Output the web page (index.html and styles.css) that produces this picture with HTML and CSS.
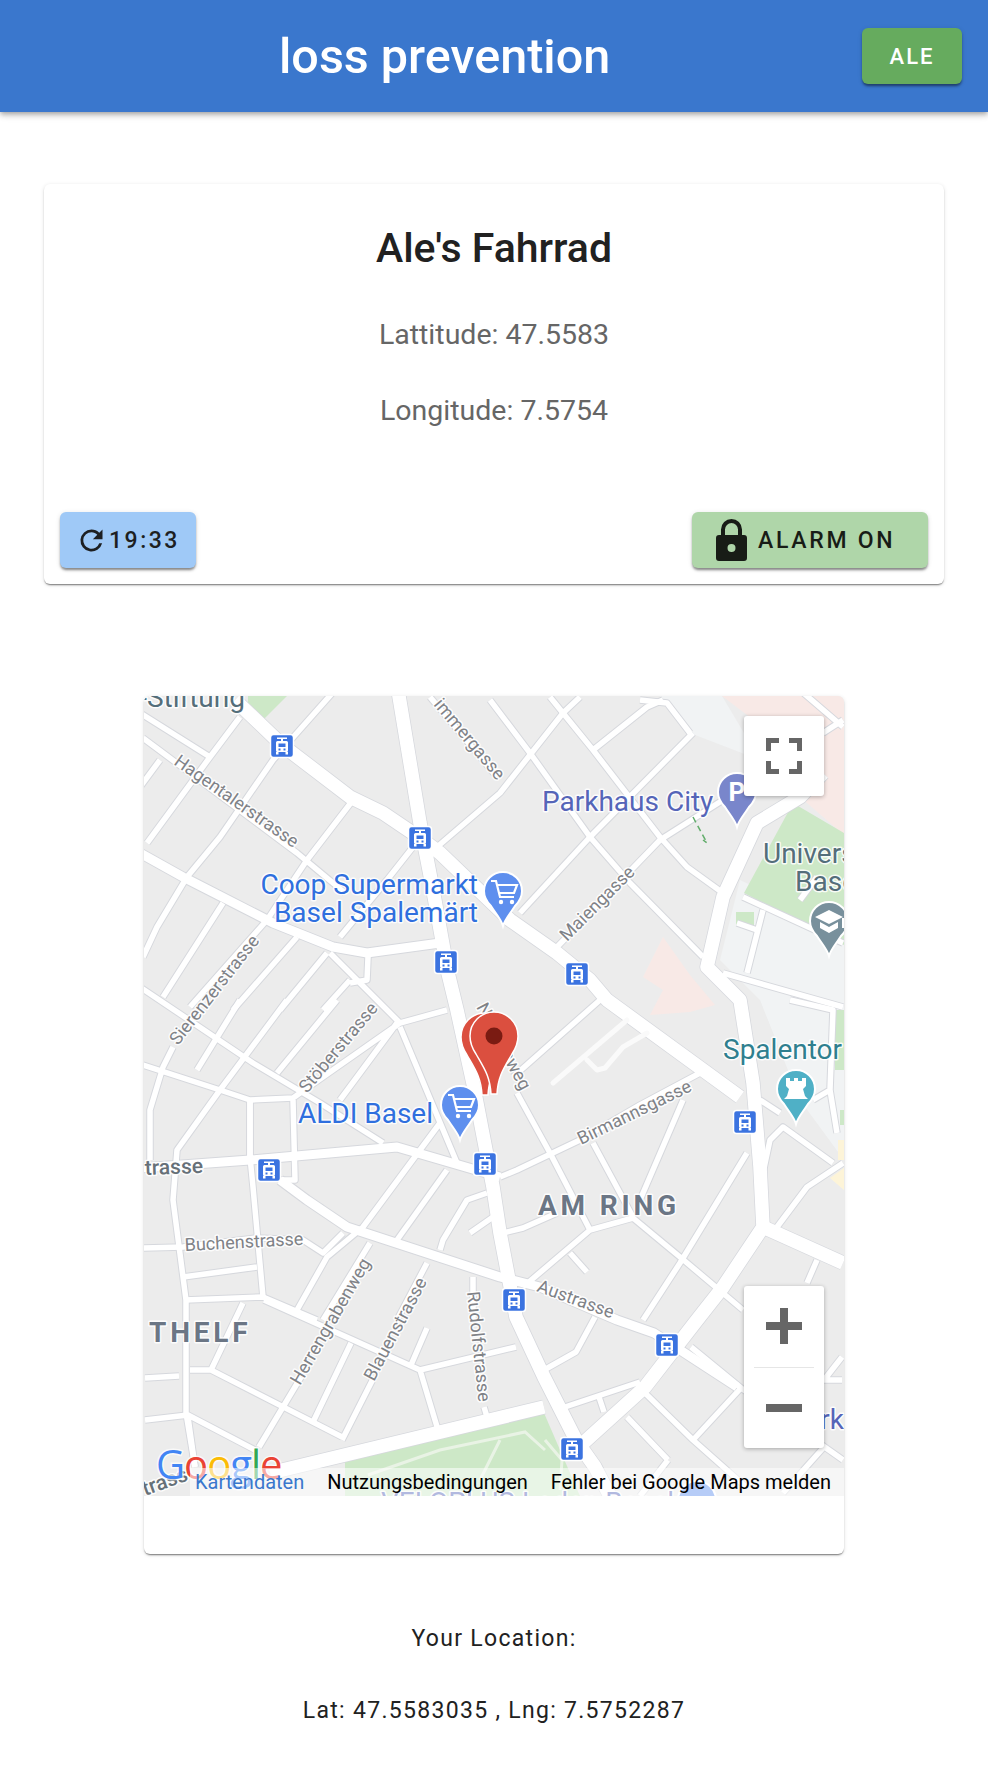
FILE: index.html
```html
<!DOCTYPE html>
<html lang="de">
<head>
    <meta charset="UTF-8">
    <title>loss prevention</title>
    <link rel="stylesheet" href="styles.css">
</head>
<body>

<header class="topbar">
    <h1 class="brand">loss prevention</h1>
    <button class="btn btn-user">ALE</button>
</header>

<main class="page">
    <section class="card bike-card">
        <h2 class="bike-name">Ale's Fahrrad</h2>
        <p class="coord">Lattitude: 47.5583</p>
        <p class="coord">Longitude: 7.5754</p>
        <div class="bike-actions">
            <button class="btn btn-refresh">
                <svg class="icon-refresh" viewBox="0 0 24 24"><path d="M17.65 6.35A7.96 7.96 0 0 0 12 4a8 8 0 1 0 7.73 10h-2.08A6 6 0 1 1 12 6c1.66 0 3.14.69 4.22 1.78L13 11h7V4l-2.35 2.35z"/></svg>
                19:33
            </button>
            <button class="btn btn-alarm">
                <svg class="icon-lock" viewBox="0 0 31 42"><path fill-rule="evenodd" d="M3 16h2V10.500a10.500 10.500 0 0 1 21 0V16h2a3 3 0 0 1 3 3v20a3 3 0 0 1-3 3H3a3 3 0 0 1-3-3V19a3 3 0 0 1 3-3zM9 16h13V10.500a6.500 6.500 0 0 0-13 0V16zM15.500 25a4 4 0 1 0 0 8 4 4 0 0 0 0-8z"/></svg>
                ALARM ON
            </button>
        </div>
    </section>

    <section class="card map-card">
        <div class="map">
            <svg class="map-canvas" viewBox="144 696 700 800">
                <defs>
                    <g id="thinRoads">
                        <path d="M140 713L210 757M143 738L297 853L345 893M335 690L273 760L220 837L187 877L157 927L143 957M240 717L210 757L147 843M160 760L140 787"/>
                        <path d="M353 800L307 860L267 920L190 1007M223 903L163 997M297 937L233 1010M327 953L280 1010M350 980L323 1010"/>
                        <path d="M330 953L400 1023M368 957L367 980L350 983M140 987L253 1063L320 1103L383 1143M413 847L387 880L340 937"/>
                        <path d="M437 847L500 793L563 713L580 697M430 697L497 777M490 700L530 753L590 837L630 883L703 957"/>
                        <path d="M550 697L593 750L660 837L687 867L723 893M593 750L647 707L663 700M520 913L590 837L693 733M557 947L660 840L723 800L760 775"/>
                        <path d="M690 733L667 703L640 700M743 897L843 943M737 923L757 930M763 910L747 973M723 973L843 1007M800 690L843 727M800 900L817 877M823 733L843 720"/>
                        <path d="M600 1000L513 1077M517 1093L550 1153L590 1230M593 1143L633 1217M683 1100L640 1200"/>
                        <path d="M503 1233L523 1228L557 1213M590 1230L633 1218L680 1257L743 1310M523 1287L590 1230M570 1253L587 1272M747 1153L680 1263L643 1320"/>
                        <path d="M777 1227L807 1187L843 1163M763 1173L770 1140L783 1127L833 1163M837 1133L830 1090L833 1010L790 1000M813 1100L830 1090M760 1100L780 1113M817 1260L807 1283"/>
                        <path d="M143 1065L220 1090L250 1100L293 1098L400 1023L447 1010M240 1000L197 1070M173 1047L163 1067L150 1110L150 1160M287 1000L220 1090L177 1150L173 1200L186 1300L186 1413L195 1467M337 1000L277 1073M397 1023L340 1100"/>
                        <path d="M400 1027L457 1163M250 1100L250 1157L253 1187L263 1297M293 1100L295 1180L280 1180M440 1123L363 1227L327 1257L297 1310M447 1170L397 1240"/>
                        <path d="M140 1248L183 1247L257 1238L303 1240L323 1253L343 1233M183 1277L257 1267M185 1300L263 1297L317 1320M370 1243L323 1320M427 1263L397 1320M440 1250L443 1240L467 1200L487 1193M470 1233L493 1217M473 1277L473 1320"/>
                        <path d="M145 1378L179 1376M190 1370L211 1370L342 1437M243 1303L211 1370M264 1300L420 1370L516 1347M351 1343L314 1420M301 1377L259 1447M374 1377L342 1440M420 1370L438 1430M484 1407L488 1420"/>
                        <path d="M145 1420L188 1415L255 1450M188 1417L195 1467M427 1328L411 1365M544 1370L576 1352L595 1317M640 1382L565 1407M599 1397L604 1412M691 1347L741 1388L693 1440L645 1393M627 1417L668 1460M693 1440L746 1487M741 1388L843 1460M824 1380L842 1380M824 1380L842 1357M824 1447L783 1493M668 1460L640 1496"/>
                        <path d="M500 1177L517 1170L580 1140L640 1105L700 1073M250 1160L250 1100"/>
                    </g>
                    <g id="mainRoads">
                        <path d="M235 700L282 745L350 797L383 813L420 838L440 853L510 920L557 953L590 980L607 1000L703 1070L740 1097"/>
                        <path d="M398 690L420 823L433 890L448 973L457 1010L473 1083L493 1187L500 1233L516 1317L544 1377L576 1440L595 1467L610 1496"/>
                        <path d="M270 1473L544 1407"/>
                        <path d="M823 773L800 797L757 823L723 897L707 967L740 1000L753 1083L760 1167L763 1227L723 1287L697 1320L645 1387L581 1445"/>
                        <path d="M763 1227L843 1263"/>
                    </g>
                    <g id="midRoads">
                        <path d="M140 853L183 877L273 923L333 947L367 953L440 943"/>
                        <path d="M140 1168L250 1160L397 1147L500 1177"/>
                        <path d="M280 1180L307 1200L347 1227L500 1277L540 1287L617 1320L654 1333L737 1387"/>
                    </g>
                    <path id="poiPin" d="M0 35C-2 28-7 23-12 15C-16 11-19 6-19 0A19 19 0 0 1 19 0C19 6 16 11 12 15C7 23 2 28 0 35Z"/>
                    <path id="bigPin" d="M3 58H-3C-4 40-10 32-18 18C-22 12-24 6-24 0A24 24 0 0 1 24 0C24 6 22 12 18 18C10 32 4 40 3 58Z"/>
                    <g id="tram">
                        <rect class="tram-box" x="-11.500" y="-11.500" width="23" height="23" rx="3"/>
                        <path class="tram-glyph" d="M-5-8.500H5V-7H1V-5H4.500A1.500 1.500 0 0 1 6-3.500V4.500A1.500 1.500 0 0 1 4.500 6H6V8.500H3.500V6H-3.500V8.500H-6V6H-4.500A1.500 1.500 0 0 1-6 4.500V-3.500A1.500 1.500 0 0 1-4.500-5H-1V-7H-5ZM-3.500-2.500V1H3.500V-2.500ZM-3.500 2.500V4.500H-1.500V2.500ZM1.500 2.500V4.500H3.500V2.500Z"/>
                    </g>
                    <g id="cart">
                        <path class="cart-line" d="M-13-11H-8L-4 5H10M-7-7H13L10 1H-5"/>
                        <circle class="cart-wheel" cx="-3" cy="10" r="2.200"/>
                        <circle class="cart-wheel" cx="8" cy="10" r="2.200"/>
                    </g>
                </defs>

                <rect x="144" y="696" width="700" height="800" fill="#ececec"/>

                <!-- flaechen -->
                <path class="area-green" d="M248 696H287L263 720L248 713Z"/>
                <path class="area-pale" d="M660 696H722L760 760L690 733ZM740 880L844 930V1160L800 1100L760 1000L720 960Z"/>
                <path class="area-pink" d="M722 696H844V835L800 797L780 740ZM663 937L643 977L663 990L650 1015L690 1012L715 1005L690 975Z"/>
                <path class="area-green" d="M744 893L793 803L844 833V945L797 920Z"/>
                <rect class="area-green" x="736" y="912" width="18" height="14"/>
                <path class="area-green" d="M835 1010H844V1070H835ZM840 1110H844V1125H840Z"/>
                <path class="area-sand" d="M838 1140H844V1160H838ZM830 1178L844 1168V1190Z"/>
                <path class="area-green" d="M345 1450L544 1413L580 1496H345Z"/>

                <use href="#midRoads" class="casing road-mid"/>
                <use href="#thinRoads" class="casing road-thin"/>
                <use href="#mainRoads" class="casing road-main"/>
                <use href="#midRoads" class="fill road-mid"/>
                <use href="#thinRoads" class="fill road-thin"/>
                <use href="#mainRoads" class="fill road-main"/>
                <path class="road-pale" d="M627 1020L553 1083M587 1060L597 1070L605 1068L623 1047L647 1033"/>
                <path class="road-park" d="M368 1475L440 1450L525 1432L545 1450M500 1440L480 1480M545 1440L562 1460L560 1490M562 1455L580 1452"/>
                <path class="trail" d="M693 817L707 843L703 840"/>

                <text class="lbl lbl-uni" x="245" y="707" text-anchor="end">r-Stiftung</text>
                <text class="lbl lbl-street" transform="translate(173 764) rotate(35)">Hagentalerstrasse</text>
                <text class="lbl lbl-street" transform="translate(497 781) rotate(50)" text-anchor="end">immergasse</text>
                <text class="lbl lbl-street" transform="translate(178 1046) rotate(-52)">Sierenzerstrasse</text>
                <text class="lbl lbl-street" transform="translate(307 1094) rotate(-50)">Stöberstrasse</text>
                <text class="lbl lbl-street" transform="translate(567 942) rotate(-45)">Maiengasse</text>
                <text class="lbl lbl-street" transform="translate(581 1145) rotate(-26)">Birmannsgasse</text>
                <text class="lbl lbl-street" transform="translate(476 1007) rotate(62)">Nonnenweg</text>
                <text class="lbl lbl-street" transform="translate(185 1251) rotate(-3)">Buchenstrasse</text>
                <text class="lbl lbl-street" transform="translate(300 1386) rotate(-60)">Herrengrabenweg</text>
                <text class="lbl lbl-street" transform="translate(374 1382) rotate(-62)">Blauenstrasse</text>
                <text class="lbl lbl-street" transform="translate(467 1292) rotate(84)">Rudolfstrasse</text>
                <text class="lbl lbl-street" transform="translate(536 1291) rotate(20)">Austrasse</text>
                <text class="lbl lbl-road" transform="translate(145 1175) rotate(-2)">trasse</text>
                <text class="lbl lbl-road" transform="translate(145 1496) rotate(-20)">trass</text>
                <text class="lbl lbl-area" x="538" y="1215">AM RING</text>
                <text class="lbl lbl-area" x="149" y="1342">THELF</text>

                <text class="lbl lbl-shop" x="478" y="894" text-anchor="end">Coop Supermarkt</text>
                <text class="lbl lbl-shop" x="478" y="922" text-anchor="end">Basel Spalemärt</text>
                <text class="lbl lbl-shop" x="433" y="1123" text-anchor="end">ALDI Basel</text>
                <text class="lbl lbl-park" x="542" y="811">Parkhaus City</text>
                <text class="lbl lbl-park" x="844" y="1429" text-anchor="end">rk</text>
                <text class="lbl lbl-uni" x="763" y="863">Universität</text>
                <text class="lbl lbl-uni" x="795" y="891">Basel</text>
                <text class="lbl lbl-sight" x="723" y="1059">Spalentor</text>
                <text class="lbl lbl-park" x="381" y="1512">VELOPLUS Laden Basel</text>

                <use href="#poiPin" class="pin pin-shop" x="503" y="891"/>
                <use href="#cart" x="504" y="892"/>
                <use href="#poiPin" class="pin pin-shop" x="460" y="1105"/>
                <use href="#cart" x="461" y="1106"/>
                <use href="#poiPin" class="pin pin-park" x="737" y="792"/>
                <text class="pin-letter" x="737" y="801" text-anchor="middle">P</text>
                <use href="#poiPin" class="pin pin-uni" x="829" y="921"/>
                <path class="pin-mark" d="M829 910L843 917L829 924L815 917ZM820 922L829 927L838 922V928L829 933L820 928ZM842 918H844V928H842Z"/>
                <use href="#poiPin" class="pin pin-sight" x="796" y="1089"/>
                <path class="pin-mark" d="M786 1078H790V1081H794V1078H798V1081H802V1078H806V1086L803 1089L805 1096L808 1099H784L787 1096L789 1089L786 1086Z"/>
                <use href="#poiPin" class="pin pin-shop" x="697" y="1500"/>

                <use href="#tram" x="282" y="746"/>
                <use href="#tram" x="420" y="838"/>
                <use href="#tram" x="446" y="962"/>
                <use href="#tram" x="577" y="974"/>
                <use href="#tram" x="269" y="1170"/>
                <use href="#tram" x="485" y="1164"/>
                <use href="#tram" x="745" y="1122"/>
                <use href="#tram" x="514" y="1300"/>
                <use href="#tram" x="667" y="1345"/>
                <use href="#tram" x="572" y="1449"/>

                <use href="#bigPin" class="marker" x="485" y="1037"/>
                <use href="#bigPin" class="marker" x="494" y="1036"/>
                <circle cx="494" cy="1036" r="8.500" fill="#7a1b12"/>

                <text class="logo" x="156" y="1479"><tspan fill="#4285f4">G</tspan><tspan fill="#ea4335">o</tspan><tspan fill="#fbbc05">o</tspan><tspan fill="#4285f4">g</tspan><tspan fill="#34a853">l</tspan><tspan fill="#ea4335">e</tspan></text>
            </svg>

            <button class="map-btn map-fullscreen">
                <svg viewBox="0 0 36 36" class="fs-icon"><path d="M2.500 13V2.500H13M23 2.500H33.500V13M33.500 23V33.500H23M13 33.500H2.500V23"/></svg>
            </button>
            <div class="map-btn map-zoom">
                <div class="zoom-half">
                    <svg viewBox="0 0 36 36" class="zoom-icon"><path d="M14 0H22V14H36V22H22V36H14V22H0V14H14Z"/></svg>
                </div>
                <div class="zoom-sep"></div>
                <div class="zoom-half">
                    <svg viewBox="0 0 36 8" class="zoom-icon zoom-minus"><rect width="36" height="8"/></svg>
                </div>
            </div>
            <div class="map-legal">
                <span class="legal-data">Kartendaten</span>
                <span>Nutzungsbedingungen</span>
                <span>Fehler bei Google Maps melden</span>
            </div>
        </div>
    </section>

    <section class="your-location">
        <p>Your Location:</p>
        <p>Lat: 47.5583035 , Lng: 7.5752287</p>
    </section>
</main>

</body>
</html>
```

FILE: styles.css
```css
* {
    box-sizing: border-box;
}
html, body {
    margin: 0;
    background: #fff;
}
body {
    font-family: Roboto, "Liberation Sans", sans-serif;
    color: #212121;
}
.topbar {
    height: 112px;
    background-color: #3a77cd;
    box-shadow: 0 2px 4px -1px rgba(0,0,0,.2), 0 4px 5px rgba(0,0,0,.14), 0 1px 10px rgba(0,0,0,.12);
    display: flex;
    align-items: center;
    padding: 0 26px 0 279px;
    justify-content: space-between;
}
.brand {
    margin: 0;
    color: #fff;
    font-size: 48.500px;
    font-weight: 500;
}
.btn {
    border: 0;
    border-radius: 6px;
    height: 56px;
    font-family: inherit;
    font-weight: 500;
    display: flex;
    align-items: center;
    box-shadow: 0 3px 3px -1px rgba(0,0,0,.35), 0 2px 2px rgba(0,0,0,.14), 0 1px 5px rgba(0,0,0,.12);
}
.btn-user {
    width: 100px;
    justify-content: center;
    background-color: #66ab5e;
    color: #fff;
    font-size: 22px;
    letter-spacing: 2px;
}
.page {
    display: flex;
    flex-direction: column;
    align-items: center;
    padding-top: 72px;
}
.card {
    background: #fff;
    border-radius: 6px;
    box-shadow: 0 2px 2px -1px rgba(0,0,0,.4), 0 1px 1px rgba(0,0,0,.14), 0 1px 4px rgba(0,0,0,.12);
}
.bike-card {
    width: 900px;
    height: 400px;
    padding: 0 16px;
    display: flex;
    flex-direction: column;
    text-align: center;
}
.bike-name {
    margin: 40px 0 0;
    font-size: 41px;
    line-height: 48px;
    font-weight: 500;
}
.coord {
    margin: 44px 0 0;
    font-size: 28.500px;
    line-height: 38px;
    font-weight: 400;
    color: #666;
}
.coord + .coord {
    margin-top: 38px;
}
.bike-actions {
    margin-top: auto;
    margin-bottom: 16px;
    display: flex;
    justify-content: space-between;
}
.btn-refresh {
    width: 136px;
    padding-left: 15px;
    gap: 1px;
    background-color: #9fc9f7;
    color: #1d1f22;
    font-size: 23px;
    letter-spacing: 2.500px;
}
.icon-refresh {
    width: 33px;
    height: 33px;
    fill: #1d1f22;
    flex: none;
}
.btn-alarm {
    width: 236px;
    padding-left: 24px;
    gap: 11px;
    background-color: #afd6a9;
    color: #181c16;
    font-size: 23px;
    letter-spacing: 2.700px;
}
.icon-lock {
    width: 31px;
    height: 42px;
    fill: #181c16;
    flex: none;
}
.map-card {
    width: 700px;
    height: 858px;
    margin-top: 112px;
}
.map {
    position: relative;
    width: 700px;
    height: 800px;
    overflow: hidden;
    border-radius: 6px 6px 0 0;
}
.map-canvas {
    display: block;
    width: 700px;
    height: 800px;
}
.casing {
    fill: none;
    stroke: #d6d8dd;
    stroke-linejoin: round;
}
.fill {
    fill: none;
    stroke: #fff;
    stroke-linejoin: round;
}
.casing.road-thin { stroke-width: 7.500px; }
.fill.road-thin { stroke-width: 5.500px; }
.casing.road-mid { stroke-width: 11px; }
.fill.road-mid { stroke-width: 9px; }
.casing.road-main { stroke-width: 15px; }
.fill.road-main { stroke-width: 13.500px; }
.road-pale {
    fill: none;
    stroke: #fafafa;
    stroke-width: 5px;
    stroke-linecap: round;
    stroke-linejoin: round;
}
.road-park {
    fill: none;
    stroke: #e9f3e5;
    stroke-width: 3px;
}
.trail {
    fill: none;
    stroke: #62ad6b;
    stroke-width: 1.500px;
    stroke-dasharray: 6 4;
}
.area-green { fill: #cde8c7; }
.area-pale { fill: #f1f3f4; }
.area-pink { fill: #f8e9e6; }
.area-sand { fill: #fdf4d8; }
.lbl {
    font-family: Roboto, sans-serif;
    paint-order: stroke;
    stroke: #fff;
    stroke-width: 3px;
    stroke-linejoin: round;
    stroke-opacity: .85;
}
.lbl-street {
    font-size: 18px;
    fill: #7f8287;
}
.lbl-road {
    font-size: 21px;
    font-weight: 500;
    fill: #667078;
}
.lbl-area {
    font-size: 28px;
    font-weight: 700;
    letter-spacing: 3.800px;
    fill: #6b7685;
}
.lbl-shop {
    font-size: 28px;
    fill: #2f6fde;
}
.lbl-park {
    font-size: 28px;
    fill: #5565b8;
}
.lbl-uni {
    font-size: 28px;
    fill: #546e7a;
}
.lbl-sight {
    font-size: 28px;
    fill: #2f7f8f;
}
.pin {
    stroke: #fff;
    stroke-width: 2px;
}
.pin-shop { fill: #5e8fee; }
.pin-park { fill: #7986cb; }
.pin-uni { fill: #78909c; }
.pin-sight { fill: #4fb0c6; }
.pin-letter {
    font-family: Roboto, sans-serif;
    font-size: 26px;
    font-weight: 700;
    fill: #fff;
}
.pin-mark { fill: #fff; }
.cart-line {
    fill: none;
    stroke: #fff;
    stroke-width: 2.200px;
}
.cart-wheel { fill: #fff; }
.tram-box {
    fill: #3b73e0;
    stroke: #fff;
    stroke-width: 1.500px;
}
.tram-glyph {
    fill: #fff;
    fill-rule: evenodd;
}
.marker {
    fill: #db4f3f;
    stroke: #fff;
    stroke-width: 1.500px;
}
.logo {
    font-family: "Open Sans", sans-serif;
    font-size: 40px;
    letter-spacing: -1px;
    paint-order: stroke;
    stroke: #fff;
    stroke-width: 3px;
    stroke-opacity: .7;
}
.map-btn {
    position: absolute;
    background: #fff;
    border: 0;
    border-radius: 3px;
    box-shadow: 0 1px 4px rgba(0,0,0,.3);
    padding: 0;
}
.map-fullscreen {
    top: 20px;
    right: 20px;
    width: 80px;
    height: 80px;
    display: flex;
    align-items: center;
    justify-content: center;
}
.fs-icon {
    width: 36px;
    height: 36px;
    fill: none;
    stroke: #666;
    stroke-width: 5px;
}
.map-zoom {
    top: 590px;
    right: 20px;
    width: 80px;
    height: 162px;
    display: flex;
    flex-direction: column;
    align-items: center;
}
.zoom-half {
    height: 80.500px;
    display: flex;
    align-items: center;
    justify-content: center;
}
.zoom-sep {
    width: 60px;
    height: 1px;
    background: #e6e6e6;
}
.zoom-icon {
    display: block;
    width: 36px;
    height: 36px;
    fill: #666;
}
.zoom-minus {
    height: 8px;
}
.map-legal {
    position: absolute;
    right: 0;
    bottom: 0;
    height: 28px;
    width: 654px;
    display: flex;
    align-items: center;
    justify-content: space-between;
    padding: 0 13px 0 5px;
    background: rgba(255,255,255,.55);
    font-size: 20px;
    color: #000;
}
.legal-data {
    color: #3a77cd;
}
.your-location {
    margin-top: 71px;
    text-align: center;
    font-size: 23px;
    letter-spacing: 1.300px;
    color: #212121;
}
.your-location p {
    margin: 0 0 44px;
    line-height: 28px;
}
```
